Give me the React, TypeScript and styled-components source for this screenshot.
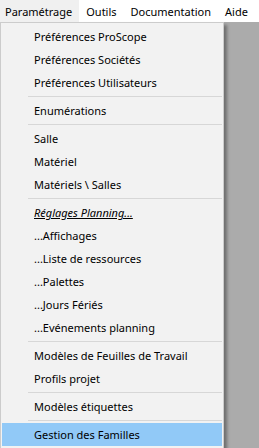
import styled, { createGlobalStyle } from 'styled-components'

const GlobalStyle = createGlobalStyle`
  html, body {
    margin: 0;
    padding: 0;
    background: #ababab;
    font-family: 'Noto Sans', 'Open Sans', sans-serif;
    font-size: 11px;
    color: #000;
  }
`

const Page = styled.div`
  width: 259px;
  height: 448px;
  overflow: hidden;
  background: #ababab;
`

const MenuBar = styled.div`
  display: flex;
  height: 22px;
  background: #fff;
  align-items: stretch;
`

const BarItem = styled.div<{ $open?: boolean }>`
  display: flex;
  align-items: center;
  padding: 0 7px;
  white-space: nowrap;
  background: ${(p) => (p.$open ? '#f0f0f0' : 'transparent')};

  &:first-child {
    padding-left: 5px;
  }
`

const Dropdown = styled.div`
  width: 220px;
  padding: 2px 1px 2px 1px;
  border: 1px solid #cccccc;
  background: #f2f2f2;
  box-shadow: 3px 3px 3px rgba(0, 0, 0, 0.35);
`

const Item = styled.div<{ $active?: boolean; $title?: boolean }>`
  height: 23px;
  line-height: 23px;
  padding-left: 32px;
  white-space: nowrap;
  background: ${(p) => (p.$active ? '#91c9f7' : 'transparent')};
  font-style: ${(p) => (p.$title ? 'italic' : 'normal')};
  text-decoration: ${(p) => (p.$title ? 'underline' : 'none')};
`

const Separator = styled.div`
  height: 1px;
  margin: 2px 0 2px 26px;
  background: #d7d7d7;
`

type Entry = { label: string; title?: boolean; active?: boolean } | 'sep'

const entries: Entry[] = [
  { label: 'Préférences ProScope' },
  { label: 'Préférences Sociétés' },
  { label: 'Préférences Utilisateurs' },
  'sep',
  { label: 'Enumérations' },
  'sep',
  { label: 'Salle' },
  { label: 'Matériel' },
  { label: 'Matériels \\ Salles' },
  'sep',
  { label: 'Réglages Planning...', title: true },
  { label: '...Affichages' },
  { label: '...Liste de ressources' },
  { label: '...Palettes' },
  { label: '...Jours Fériés' },
  { label: '...Evénements planning' },
  'sep',
  { label: 'Modèles de Feuilles de Travail' },
  { label: 'Profils projet' },
  'sep',
  { label: 'Modèles étiquettes' },
  'sep',
  { label: 'Gestion des Familles', active: true },
]

const App = () => {
  return (
    <Page>
      <GlobalStyle />
      <MenuBar>
        <BarItem $open>Paramétrage</BarItem>
        <BarItem>Outils</BarItem>
        <BarItem>Documentation</BarItem>
        <BarItem>Aide</BarItem>
      </MenuBar>
      <Dropdown>
        {entries.map((e, i) =>
          e === 'sep' ? (
            <Separator key={i} />
          ) : (
            <Item key={i} $active={e.active} $title={e.title}>
              {e.label}
            </Item>
          )
        )}
      </Dropdown>
    </Page>
  )
}

export default App
